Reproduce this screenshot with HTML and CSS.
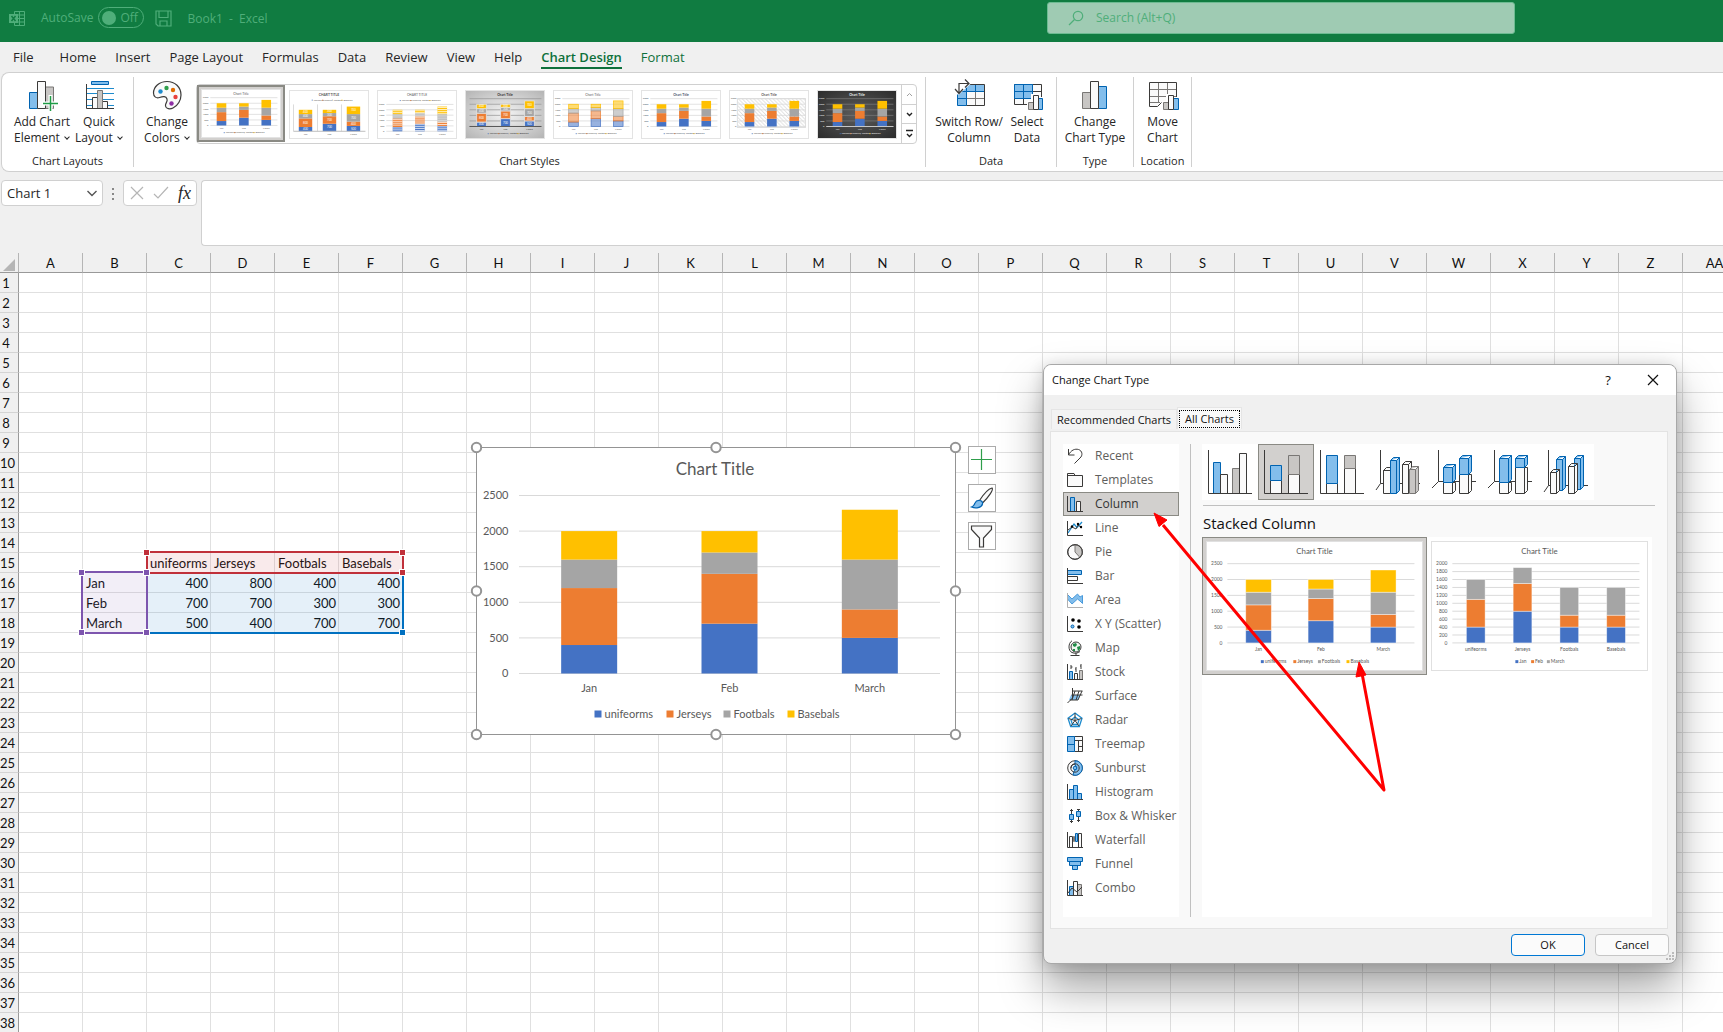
FILE: index.html
```html
<!DOCTYPE html>
<html lang="en">
<head>
<meta charset="utf-8">
<title>Book1 - Excel</title>
<link rel="stylesheet" href="styles.css">
</head>
<body>
<header class="titlebar">
  <svg class="app-icon" width="17" height="17" viewBox="0 0 17 17" fill="none" stroke="#4fae7a"><path d="M5.500 4V1.500h10v14h-10V13M10.500 1.500v14M5.500 5h10M9 8.500h6.500M5.500 12h10"/><rect x="0" y="4" width="9" height="9" fill="#4fae7a" stroke="none"/><path d="M2.500 6l4 5M6.500 6l-4 5" stroke="#107c41" stroke-width="1.500"/></svg>
  <label class="autosave">AutoSave <span class="toggle"><input type="checkbox"><span class="knob"></span>Off</span></label>
  <button class="save" aria-label="Save"><svg width="17" height="17" viewBox="0 0 17 17" fill="none" stroke="#4fae7a" stroke-width="1.200"><path d="M1 1h15v15H3l-2-2zM4 1v6.500h9V1M5 16v-5h7v5"/></svg></button>
  <span class="doc">Book1&nbsp; -&nbsp; Excel</span>
  <label class="search"><svg width="16" height="16" viewBox="0 0 16 16" fill="none" stroke="#4fae7a" stroke-width="1.200"><circle cx="10" cy="6" r="4.700"/><path d="M6.500 9.500L1 15"/></svg><input type="search" placeholder="Search (Alt+Q)" aria-label="Search"></label>
</header>

<nav class="tabs">
  <a href="#">File</a><a href="#">Home</a><a href="#">Insert</a><a href="#">Page Layout</a><a href="#">Formulas</a><a href="#">Data</a><a href="#">Review</a><a href="#">View</a><a href="#">Help</a><a href="#" class="green active">Chart Design</a><a href="#" class="green">Format</a>
</nav>

<section class="ribbon">
  <div class="group g-layouts">
    <div class="tools">
      <button class="tool w60"><svg width="32" height="32" viewBox="0 0 32 32"><path d="M19.500 8h8v21.500h-8z" fill="#c8c6c4" stroke="#797775"/><path d="M3.500 13.500h8v16h-8z" fill="#83beec" stroke="#0063b1"/><path d="M11.500 2.500h8v27h-8z" fill="#fafafa" stroke="#3b3a39"/><path d="M24.500 16v16M16 24.500h16" stroke="#fff" stroke-width="4"/><path d="M24.500 17v15M17 24.500h15" stroke="#1e9b45" stroke-width="1.500"/></svg><span>Add Chart<br>Element <i class="chev"></i></span></button>
      <button class="tool w54"><svg width="32" height="32" viewBox="0 0 32 32"><path d="M8.500 2.500h17v3h-17z" fill="#83beec" stroke="#0063b1"/><path d="M4 9.500h27M4 14.500h27M4 20.500h27M4 26.500h27" stroke="#1e8bcd"/><path d="M9.500 18.500h5v11h-5zM19.500 22.500h5v7h-5z" fill="#fafafa" stroke="#3b3a39"/><path d="M14.500 11.500h5v18h-5z" fill="#c8c6c4" stroke="#797775"/><path d="M3.500 5v24.500H31" fill="none" stroke="#3b3a39"/></svg><span>Quick<br>Layout <i class="chev"></i></span></button>
    </div>
    <h2>Chart Layouts</h2>
  </div>
  <div class="group g-styles">
    <div class="tools">
      <button class="tool w58"><svg width="32" height="32" viewBox="0 0 32 32"><path d="M16 2.500C8 2.500 2.500 8 2.500 14c0 4 3 5.500 6 4.500 3.500-1.200 6.500-1.500 7.500 1.500 1 3-2 4-1.500 7 .5 3 4.500 3.500 7.500 2C27 26.500 30 21 30 16 30 8 24 2.500 16 2.500z" fill="#fafafa" stroke="#3b3a39" stroke-width="1.200"/><circle cx="9.500" cy="12.500" r="2.200" fill="#1e8bcd"/><circle cx="15.500" cy="9" r="2.200" fill="#2f9e4b"/><circle cx="22" cy="11" r="2.200" fill="#e06c00"/><circle cx="24.500" cy="18" r="2.200" fill="#e8403c"/><circle cx="20.500" cy="24.500" r="2.200" fill="#8e2fa5"/></svg><span>Change<br>Colors <i class="chev"></i></span></button>
      <div class="gallery">
        <button class="style on" data-style="0" aria-label="Style 1"></button><button class="style" data-style="1" aria-label="Style 2"></button><button class="style" data-style="2" aria-label="Style 3"></button><button class="style" data-style="3" aria-label="Style 4"></button><button class="style" data-style="4" aria-label="Style 5"></button><button class="style" data-style="5" aria-label="Style 6"></button><button class="style" data-style="6" aria-label="Style 7"></button><button class="style" data-style="7" aria-label="Style 8"></button>
        <div class="scroller">
          <button aria-label="Up"><svg width="9" height="9" viewBox="0 0 9 9" fill="none" stroke="#a0a0a0"><path d="M2 6l2.500-2.500L7 6"/></svg></button>
          <button aria-label="Down"><svg width="9" height="9" viewBox="0 0 9 9" fill="none" stroke="#222" stroke-width="1.400"><path d="M2 3l2.500 2.500L7 3"/></svg></button>
          <button aria-label="More"><svg width="9" height="9" viewBox="0 0 9 9" fill="none" stroke="#222" stroke-width="1.400"><path d="M1 1.500h7M2 5l2.500 2.500L7 5"/></svg></button>
        </div>
      </div>
    </div>
    <h2>Chart Styles</h2>
  </div>
  <div class="group g-data">
    <div class="tools">
      <button class="tool w76"><svg width="32" height="32" viewBox="0 0 32 32"><path d="M4.500 5.500h27v21h-27z" fill="#fafafa"/><path d="M4.500 5.500h27v7h-18v14h-9z" fill="#83beec"/><path d="M13.500 19.500h18M22.500 12.500v14" stroke="#797775"/><path d="M13.500 12.500h18M13.500 12.500v14M4.500 12.500h9M22.500 5.500v7M4.500 19.500h9M13.500 5.500v7M4.500 14v12.500h9" stroke="#0063b1" fill="none"/><path d="M14 5.500h17.500v21h-18" fill="none" stroke="#3b3a39"/><path d="M0 0h17.500v5L6 15.500H0z" fill="#fff"/><path d="M6 14V4.500h10M12 .5l4 4-4 4M2 10l4 4.500L10 10" fill="none" stroke="#3b3a39" stroke-width="1.200"/></svg><span>Switch Row/<br>Column</span></button>
      <button class="tool w40"><svg width="32" height="32" viewBox="0 0 32 32"><path d="M3.500 5.500h27v20h-27z" fill="#fafafa" stroke="#3b3a39"/><path d="M12.500 19v7M3 19.500h20M21.500 12.500h9" stroke="#3b3a39"/><path d="M3.500 5.500h18v14h-18zM12.500 5.500v14M3.500 12.500h18" fill="#83beec" stroke="#0063b1"/><path d="M16 22h4v-7h7v3h5v14H16z" fill="#fff"/><path d="M17.500 23.500h5v7h-5z" fill="#c8c6c4" stroke="#797775"/><path d="M27.500 19.500h4v11h-4z" fill="#83beec" stroke="#0063b1"/><path d="M22.500 16.500h5v14h-5z" fill="#fafafa" stroke="#3b3a39"/></svg><span>Select<br>Data</span></button>
    </div>
    <h2>Data</h2>
  </div>
  <div class="group g-type">
    <div class="tools">
      <button class="tool w76"><svg width="32" height="32" viewBox="0 0 32 32"><path d="M3.500 13.500h8v16h-8z" fill="#c8c6c4" stroke="#797775"/><path d="M19.500 7.500h8v22h-8z" fill="#83beec" stroke="#0063b1"/><path d="M11.500 2.500h8v27h-8z" fill="#fafafa" stroke="#3b3a39"/></svg><span>Change<br>Chart Type</span></button>
    </div>
    <h2>Type</h2>
  </div>
  <div class="group g-loc">
    <div class="tools">
      <button class="tool w54"><svg width="32" height="32" viewBox="0 0 32 32"><path d="M2.500 3.500h27v20l-15 0-4 4h-8z" fill="#fafafa"/><path d="M11.500 3.500v20M20.500 3.500v16M3 10.500h26M3 17.500h26M3 23.500h10" fill="none" stroke="#797775"/><path d="M29.500 18V3.500h-27v24h8l4-4" fill="none" stroke="#3b3a39"/><path d="M15 22h4v-7h7v3h6v14H15z" fill="#fff"/><path d="M16.500 23.500h5v7h-5z" fill="#c8c6c4" stroke="#797775"/><path d="M26.500 19.500h5v11h-5z" fill="#83beec" stroke="#0063b1"/><path d="M21.500 16.500h5v14h-5z" fill="#fafafa" stroke="#3b3a39"/></svg><span>Move<br>Chart</span></button>
    </div>
    <h2>Location</h2>
  </div>
</section>

<section class="formula">
  <div class="namebox"><input value="Chart 1" aria-label="Name box"><button aria-label="Names"><svg width="12" height="12" viewBox="0 0 12 12" fill="none" stroke="#555" stroke-width="1.400"><path d="M1.500 4L6 8.500 10.500 4"/></svg></button></div>
  <svg class="dots" width="3" height="12" viewBox="0 0 3 12" fill="#888"><path d="M0 0h2v2H0zM0 5h2v2H0zM0 10h2v2H0z"/></svg>
  <div class="fxbox">
    <button aria-label="Cancel entry"><svg width="14" height="14" viewBox="0 0 14 14" stroke="#b5b5b5" stroke-width="1.200"><path d="M1 1l12 12M13 1L1 13"/></svg></button>
    <button aria-label="Enter"><svg width="16" height="14" viewBox="0 0 16 14" fill="none" stroke="#b5b5b5" stroke-width="1.200"><path d="M1 8l4 4L15 1"/></svg></button>
    <button class="fx">fx</button>
  </div>
  <textarea aria-label="Formula bar"></textarea>
</section>

<main class="sheet">
  <table><thead id="cols"></thead><tbody id="rows"></tbody></table>

  <div class="range blue"><i class="br"></i></div>
  <div class="range red"><i class="tl"></i><i class="tr"></i><i class="br"></i></div>
  <div class="range purple"><i class="tl"></i><i class="tr"></i><i class="bl"></i><i class="br"></i></div>

  <figure class="chart" id="chart"></figure>
  <div class="chart-tools">
    <button aria-label="Chart elements"><svg width="26" height="26" viewBox="0 0 26 26"><path d="M12.500 2v21M2 12.500h21" stroke="#2f9e4b" stroke-width="1.200"/></svg></button>
    <button aria-label="Chart styles"><svg width="26" height="26" viewBox="0 0 26 26"><path d="M10.500 15.500C14 10 19 4 23 3c2 1.500-4 10-9.500 15z" fill="#fafafa" stroke="#3b3a39" stroke-width="1.200"/><path d="M10.500 15.500c2 0 3.500 1.500 3 3.500-1 4-7 4.500-11 3 3-1 2.500-2 3.500-4 .8-1.700 2.500-2.700 4.500-2.500z" fill="#83beec" stroke="#0063b1" stroke-width="1.200"/></svg></button>
    <button aria-label="Chart filters"><svg width="26" height="26" viewBox="0 0 26 26"><path d="M2.500 3h20v3.500l-8 8.500v9h-4v-9l-8-8.500z" fill="#fafafa" stroke="#3b3a39" stroke-width="1.200"/></svg></button>
  </div>
</main>

<section class="dialog" role="dialog" aria-label="Change Chart Type">
  <div class="dlg-title"><span>Change Chart Type</span><button aria-label="Help">?</button><button aria-label="Close"><svg width="12" height="12" viewBox="0 0 12 12" stroke="#111" stroke-width="1.200"><path d="M1 1l10 10M11 1L1 11"/></svg></button></div>
  <div class="dlg-tabs" role="tablist"><button role="tab">Recommended Charts</button><button role="tab" class="on"><span>All Charts</span></button></div>
  <div class="panel">
    <div class="types">
      <button><svg viewBox="0 0 16 16"><path d="M1.500 1v6h6M1.500 7C4 2 8 .5 11.500 1.500c4 1.300 4.500 6 1.500 8.500L7.500 15.500" class="k"/></svg>Recent</button>
      <button><svg viewBox="0 0 16 16"><path d="M.5 1.500h6.500l1 2h7.500v11H.5zM.5 3.500H8" class="w"/></svg>Templates</button>
      <button class="on"><svg viewBox="0 0 16 16"><path d="M3.500 1.500h4v14h-4z" class="b"/><path d="M9.500 5.500h4v10h-4z" class="w"/><path d="M.5 0v15.500H16" class="k"/></svg>Column</button>
      <button><svg viewBox="0 0 16 16"><path d="M1 13l6-9 3 3.500 5-5.500" class="bl"/><path d="M1 10l4-3 4 2 2-4 4 3" class="k"/><circle cx="5" cy="6.500" r="1.200"/><circle cx="11" cy="4" r="1.200"/><circle cx="14" cy="7" r="1.200"/><path d="M.5 1v14.500H16" class="k"/></svg>Line</button>
      <button><svg viewBox="0 0 16 16"><circle cx="8" cy="8" r="7.300" class="w"/><path d="M8 .7v7.300l5 5.500A7.300 7.300 0 0 0 8 .7z" class="g"/><circle cx="8" cy="8" r="7.300" class="k"/></svg>Pie</button>
      <button><svg viewBox="0 0 16 16"><path d="M.5 2.500h14v4H.5z" class="b"/><path d="M.5 8.500h10v4H.5z" class="w"/><path d="M.5 0v15.500H16" class="k"/></svg>Bar</button>
      <button><svg viewBox="0 0 16 16"><path d="M.5 2.500L5 7l5.500-5 2.500 3 2.500-1.500v8L13 9l-2.500-2L5 12 .5 7z" class="b l"/><path d="M.5 1v14.500H16" class="k l2"/></svg>Area</button>
      <button><svg viewBox="0 0 16 16"><circle cx="6" cy="4" r="1.800"/><circle cx="12" cy="5" r="1.800"/><circle cx="12" cy="11" r="1.800"/><circle cx="5.500" cy="10.500" r="1.500" class="b"/><path d="M.5 0v15.500H16" class="k"/></svg>X Y (Scatter)</button>
      <button><svg viewBox="0 0 16 16"><circle cx="9" cy="7" r="5" fill="#eef7f0" stroke="#3b3a39"/><path d="M6 4l3-1 1 2-2 2-2-1zM10 7l3-1v3l-2 2zM6 9h2v2H6z" fill="#1e8b45"/><path d="M5 .8C1 3 1 11 5 12.500c3 1.500 6 .5 8-1M9 13v2M3.500 15.500h9" class="k"/></svg>Map</button>
      <button><svg viewBox="0 0 16 16"><path d="M2.500 7.500h3v8h-3z" class="b"/><path d="M7.500 9.500h3v6h-3z" class="w"/><path d="M12.500 6.500h3v9h-3z" class="g"/><path d="M.5 0v15.500H16M4 1v4M9 3v5M14 0v5M4 3h1.500M8 5h1M13 2h1" class="k"/></svg>Stock</button>
      <button><svg viewBox="0 0 16 16"><path d="M4 7h9l-2 5H2z" fill="#83beec"/><path d="M5.500 0v10L.5 15M6 3h9.500M4.500 7h11M3 12h8M8 3L5 12M12 3l-3 9M15 3l-4 9" class="k"/></svg>Surface</button>
      <button><svg viewBox="0 0 16 16"><path d="M8 1l7 5.200-2.700 8.300H3.700L1 6.200zM8 5l4 3-1.500 4.500h-5L4 8z" class="bl"/><path d="M8 1v7.500M1.500 6.500L8 8.500l6.500-2M4 14l4-5.500 4 5.500" class="k"/></svg>Radar</button>
      <button><svg viewBox="0 0 16 16"><path d="M7.500.5h8v15h-8zM7.500 4.500h8M11.500 4.500v11M11.500 10.500h4" class="w"/><path d="M.5.5h7v15h-7zM.5 8.500h7" class="b"/></svg>Treemap</button>
      <button><svg viewBox="0 0 16 16"><circle cx="8" cy="8" r="7.300" class="w"/><path d="M8 .7a7.300 7.300 0 1 1-2 14.300L7 11a3.500 3.500 0 0 0 1-6z" class="b"/><path d="M4 8a4 4 0 0 1 4-4" class="k"/><circle cx="8" cy="8" r="4.200" class="k"/><circle cx="8" cy="8" r="1.800" class="b"/></svg>Sunburst</button>
      <button><svg viewBox="0 0 16 16"><path d="M2.500 5.500h4v10h-4zM6.500 1.500h4v14h-4zM10.500 9.500h4v6h-4z" class="b"/><path d="M.5 0v15.500H16" class="k"/></svg>Histogram</button>
      <button><svg viewBox="0 0 16 16"><path d="M4.500 1v14M11.500 1v13M3 2.500h3M3 13.500h3M10 1.500h3M10 12.500h3" class="k"/><path d="M2.500 6.500h4v5h-4zM9.500 3.500h4v5h-4z" class="b"/></svg>Box &amp; Whisker</button>
      <button><svg viewBox="0 0 16 16"><path d="M2.500 4.500h3v11h-3zM11.500 1.500h3v14h-3z" class="w"/><path d="M8.500 1.500h2v8h-2z" class="b"/><path d="M6.500 4.500v5h1v-5z" class="g"/><path d="M.5 0v15.500H16" class="k"/></svg>Waterfall</button>
      <button><svg viewBox="0 0 16 16"><path d="M.5 1.500h15v4H.5zM2.500 5.500h11v4h-11zM5.500 9.500h5v4h-5z" class="b"/></svg>Funnel</button>
      <button><svg viewBox="0 0 16 16"><path d="M2.500 6.500h4v9h-4z" class="b"/><path d="M10.500 4.500h4v11h-4z" class="g"/><path d="M6.500 1.500h4v14h-4z" class="w"/><path d="M.5 0v15.500H16M1 13l4-5 5 4 5-5" class="k"/></svg>Combo</button>
    </div>
    <div class="detail">
      <div class="subtypes">
        <button aria-label="Clustered Column"><svg viewBox="0 0 56 56"><path d="M11.500 18.500h7v31h-7z" class="b"/><path d="M18.500 30.500h7v19h-7z" class="w"/><path d="M30.500 24.500h7v25h-7z" class="g"/><path d="M37.500 9.500h7v40h-7z" class="w"/><path d="M6.500 6v43.500H50" class="k"/></svg></button>
        <button class="on" aria-label="Stacked Column"><svg viewBox="0 0 56 56"><path d="M12.500 36.500h11v13h-11zM30.500 30.500h11v19h-11z" class="w"/><path d="M30.500 11.500h11v19h-11z" class="g"/><path d="M12.500 21.500h11v15h-11z" class="b"/><path d="M6.500 6v43.500H50" class="k"/></svg></button>
        <button aria-label="100% Stacked Column"><svg viewBox="0 0 56 56"><path d="M12.500 39.500h11v10h-11zM30.500 24.500h11v25h-11z" class="w"/><path d="M30.500 11.500h11v13h-11z" class="g"/><path d="M12.500 11.500h11v28h-11z" class="b"/><path d="M6.500 6v43.500H50" class="k"/></svg></button>
        <button aria-label="3-D Clustered Column"><svg viewBox="0 0 56 56"><path d="M10.500 6v33.500H50M10.500 39.500L6 46" class="k"/><path d="M13.500 26.500l3-3h7l-3 3h-7zM13.500 26.500h7v23h-7z" class="w"/><path d="M20.500 16.500l3-3h6v33l-3 3h-6zM20.500 16.500h6l3-3M26.500 16.500v33" class="b"/><path d="M32.500 20.500l3-3h6v29l-3 3h-6zM32.500 20.500h6l3-3M38.500 20.500v29" class="w"/><path d="M39.500 25.500l3-3h6v24l-3 3h-6zM39.500 25.500h6l3-3M45.500 25.500v24" class="g"/></svg></button>
        <button aria-label="3-D Stacked Column"><svg viewBox="0 0 56 56"><path d="M12.500 6v31.500H50M12.500 37.500L6 44" class="k"/><path d="M17.500 38.500h12v8l-3 3h-9zM26.500 38.500v11M33.500 30.500h12v16l-3 3h-9zM42.500 30.500v19" class="w"/><path d="M17.500 23.500l3-3h9v15l-3 3h-9zM17.500 23.500h9l3-3M26.500 23.500v15M33.500 14.500l3-3h9v16l-3 3h-9zM33.500 14.500h9l3-3M42.500 14.500v16" class="b"/></svg></button>
        <button aria-label="3-D 100% Stacked Column"><svg viewBox="0 0 56 56"><path d="M12.500 6v31.500H50M12.500 37.500L6 44" class="k"/><path d="M17.500 38.500h12v8l-3 3h-9zM26.500 38.500v11M33.500 23.500h12v23l-3 3h-9zM42.500 23.500v26" class="w"/><path d="M17.500 14.500l3-3h9v24l-3 3h-9zM17.500 14.500h9l3-3M26.500 14.500v24M33.500 14.500l3-3h9v9l-3 3h-9zM33.500 14.500h9l3-3M42.500 14.500v9" class="b"/></svg></button>
        <button aria-label="3-D Column"><svg viewBox="0 0 56 56"><path d="M10.500 6v35.500H50M10.500 41.500L6 48" class="k"/><path d="M18.500 15.500l3-3h6v31l-3 3h-6zM18.500 15.500h6l3-3M24.500 15.500v31M36.500 14.500l3-3h6v31l-3 3h-6zM36.500 14.500h6l3-3M42.500 14.500v31" class="b"/><path d="M12.500 28.500l3-3h6v21l-3 3h-6zM12.500 28.500h6l3-3M18.500 28.500v21M30.500 22.500l3-3h6v27l-3 3h-6zM30.500 22.500h6l3-3M36.500 22.500v27" class="w"/></svg></button>
      </div>
      <h3>Stacked Column</h3>
      <div class="previews">
        <button class="preview on" id="preview1" aria-label="By month"></button>
        <button class="preview" id="preview2" aria-label="By product"></button>
      </div>
    </div>
  </div>
  <div class="dlg-actions"><button class="primary">OK</button><button>Cancel</button></div>
  <svg class="grip" width="9" height="9" viewBox="0 0 9 9" fill="#bbb"><path d="M6 0h2v2H6zM3 3h2v2H3zM6 3h2v2H6zM0 6h2v2H0zM3 6h2v2H3zM6 6h2v2H6z"/></svg>
  <svg class="arrows" width="240" height="290" viewBox="0 0 240 290"><path d="M14 17L235 282L212 160" fill="none" stroke="#f00" stroke-width="3" stroke-linejoin="round"/><path d="M5 5l13 7-8 6.500zM210 154l7 13-10 2z" fill="#f00" stroke="#f00"/></svg>
</section>
<script src="app.js"></script>
</body>
</html>
```

FILE: styles.css
```css
* { box-sizing: border-box; }
body { margin: 0; height: 100vh; overflow: hidden; position: relative; display: flex; flex-direction: column; background: #f0f0f0; color: #262626; font: 12px/16px "Open Sans", "Noto Sans", sans-serif; }
button, input, textarea { font: inherit; color: inherit; border: 0; padding: 0; margin: 0; background: none; }
svg { display: block; flex: none; }
h2, h3 { margin: 0; font-weight: 400; }

.titlebar { flex: none; height: 42px; display: flex; align-items: flex-start; padding: 2px 208px 0 9px; background: #107c41; color: #4fae7a; position: relative; }
.app-icon, .save { margin-top: 8px; }
.autosave { display: flex; align-items: center; gap: 5px; margin: 5px 11px 0 15px; }
.toggle { display: flex; align-items: center; gap: 4px; width: 46px; height: 21px; border: 1px solid #4fae7a; border-radius: 11px; padding-left: 3px; position: relative; }
.toggle input { position: absolute; inset: 0; width: 100%; height: 100%; opacity: 0; }
.knob { width: 14px; height: 14px; border-radius: 50%; background: #4fae7a; }
.doc { margin: 9px 0 0 15px; }
.search { margin-left: auto; width: 468px; height: 32px; display: flex; align-items: center; gap: 12px; padding-left: 20px; background: #9fcbb3; border: 1px solid #6dbb92; border-radius: 3px; }
.search input { flex: 1; outline: 0; }
.search input::placeholder { color: #4fae7a; opacity: 1; }

.tabs { flex: none; height: 30px; display: flex; gap: 19px; padding: 6px 13px 0; font-size: 13px; line-height: 18px; }
.tabs a { color: inherit; text-decoration: none; white-space: nowrap; }
.tabs a:first-child { margin-right: 7px; }
.tabs .green { color: #0e703b; }
.tabs .active { height: 21px; font-weight: 600; border-bottom: 2px solid #0e703b; }

.ribbon { flex: none; height: 100px; margin-left: 1px; display: flex; background: #fff; border: 1px solid #d0d0d0; border-right: 0; border-radius: 8px 0 0 8px; padding: 4px 0; }
.group { border-right: 1px solid #d0d0d0; display: flex; flex-direction: column; justify-content: space-between; }
.tools { display: flex; }
.group h2 { text-align: center; font-size: 11px; line-height: 12px; position: relative; }
.g-layouts { width: 132px; }
.g-layouts .tools { padding-left: 10px; }
.g-styles .tools { padding: 0 8px 0 4px; }
.g-data .tools { padding: 0 9px 0 5px; }
.g-loc .tools { justify-content: center; }
.g-loc { width: 58px; }
.tool { display: flex; flex-direction: column; align-items: center; padding-top: 2px; white-space: nowrap; gap: 3px; }
.w40 { width: 40px; } .w54 { width: 54px; } .w58 { width: 58px; } .w60 { width: 60px; } .w76 { width: 76px; }
.chev { display: inline-block; width: 4px; height: 4px; margin: 0 1px 3px 2px; border: solid #262626; border-width: 0 1px 1px 0; transform: rotate(45deg); }
.gallery { display: flex; margin-top: 7px; height: 60px; border: 1px solid #d0d0d0; border-radius: 4px; }
.style { width: 88px; padding: 4px; }
.style.on { height: 57px; padding: 2px; border: 2px solid #8a8a84; background: #d2d0ce; }
.style svg { border: 1px solid #e3e3e3; }
.scroller { width: 15px; display: flex; flex-direction: column; border-left: 1px solid #d0d0d0; }
.scroller button { flex: 1; display: grid; place-items: center; border-bottom: 1px solid #d0d0d0; }
.scroller button:last-child { border: 0; }

.formula { flex: none; display: flex; align-items: flex-start; height: 81px; padding-top: 8px; }
.namebox, .fxbox { display: flex; align-items: center; height: 26px; background: #fff; border: 1px solid #d0d0d0; border-radius: 4px; }
.namebox { width: 102px; margin-left: 1px; padding: 0 5px; font-size: 13px; }
.namebox input { width: 79px; outline: 0; }
.dots { margin: 8px 8px 0 9px; }
.fxbox { width: 74px; padding: 0 5px 0 6px; justify-content: space-between; }
.fx { font: italic 18px/20px "Liberation Serif", serif; }
.formula textarea { flex: 1; height: 66px; margin-left: 4px; background: #fff; border: 1px solid #d0d0d0; border-right: 0; border-radius: 4px 0 0 4px; resize: none; outline: 0; }

.sheet { flex: 1; position: relative; overflow: hidden; background: #fff; font: 13px/18px Lato, "Open Sans", sans-serif; color: #111; }
.sheet table { table-layout: fixed; width: 1811px; border-spacing: 0; }
.sheet th, .sheet td { height: 20px; padding: 0; border: solid #e0e0e0; border-width: 0 1px 1px 0; overflow: hidden; white-space: nowrap; width: 64px; }
.sheet th { font-weight: 400; background: #f0f0f0; }
.sheet thead th { border-color: #b5b5b5; border-bottom-color: #999; text-align: center; }
.sheet th:first-child { width: 19px; }
.sheet tbody th { border-right-color: #999; border-bottom-color: #d4d4d4; padding-right: 6px; text-align: center; }
.sheet td { padding: 1px 2px 0 3px; }
.sheet td.num { text-align: right; padding-right: 2px; }
.corner svg { margin: 5px 0 0 3px; }

.range { position: absolute; border: 2px solid; }
.range i { position: absolute; width: 7px; height: 7px; border: 1px solid #fff; background: currentColor; }
.tl { left: -5px; top: -4px; } .tr { right: -4px; top: -4px; } .bl { left: -5px; bottom: -4px; } .br { right: -4px; bottom: -4px; }
.blue { color: #0070c0; background: rgba(0,112,192,.1); left: 146px; top: 320px; width: 258px; height: 61px; border-top: 0; }
.red { color: #c0303a; background: rgba(192,48,58,.1); left: 146px; top: 298px; width: 258px; height: 23px; }
.purple { color: #7d55ae; background: rgba(125,85,174,.1); left: 81px; top: 318px; width: 67px; height: 63px; }

.chart { position: absolute; left: 470px; top: 188px; margin: 0; }
.chart-tools { position: absolute; left: 968px; top: 193px; display: flex; flex-direction: column; gap: 10px; }
.chart-tools button { width: 28px; height: 28px; background: #fff; border: 1px solid #ababab; }
svg text { font-family: Lato, "Open Sans", sans-serif; fill: #595959; }

.dialog { position: absolute; left: 1043px; top: 364px; width: 634px; background: #f0f0f0; border: 1px solid #a8a8a8; border-radius: 8px; box-shadow: 0 24px 44px rgba(0,0,0,.36), 0 2px 16px rgba(0,0,0,.16); color: #111; }
.dlg-title { display: flex; align-items: center; height: 30px; background: #fff; border-radius: 8px 8px 0 0; padding: 0 7px 0 8px; font-size: 11px; }
.dlg-title span { flex: 1; }
.dlg-title button { width: 32px; display: grid; place-items: center; font-size: 13px; }
.dlg-title button + button { margin-left: 13px; }
.dlg-tabs { display: flex; align-items: flex-end; padding: 11px 7px 0; height: 34px; font-size: 11px; }
.dlg-tabs button { height: 20px; padding: 0 5px; background: #f3f3f3; border: 1px solid #e5e5e5; border-bottom: 0; white-space: nowrap; }
.dlg-tabs .on { height: 22px; padding: 1px; background: #f9f9f9; }
.dlg-tabs .on span { display: block; border: 1px dotted #000; padding: 0 5px; }
.panel { margin: 2px 8px 0 6px; border: 1px solid #e3e3e3; background: #f9f9f9; padding: 12px 15px 11px 12px; display: flex; gap: 11px; }
.types { width: 116px; height: 473px; background: #fff; }
.types button { display: flex; align-items: center; gap: 12px; width: 100%; height: 24px; padding-left: 3px; border: 1px solid transparent; color: #605e5c; white-space: nowrap; }
.types svg { width: 16px; height: 16px; }
.types .on { background: #d2d0ce; border-color: #8a8a84; color: #333; }
.k { fill: none; stroke: #3b3a39; } .w { fill: #fafafa; stroke: #3b3a39; } .b { fill: #83beec; stroke: #0063b1; } .g { fill: #c8c6c4; stroke: #797775; } .bl { fill: none; stroke: #1e8bcd; stroke-width: 1.3; }
.l { stroke: #4a9bdc; } .l2 { stroke: #b0b0b0; }
.detail { flex: 1; border-left: 1px solid #c0c0c0; padding-left: 11px; }
.subtypes { display: flex; width: 392px; background: #fff; }
.subtypes button { width: 56px; height: 56px; position: relative; display: grid; place-items: center; }
.subtypes svg { width: 56px; height: 56px; }
.subtypes .on { background: #d2d0ce; outline: 1px solid #8a8a84; outline-offset: -1px; }
.detail h3 { margin: 5px -3px 0 1px; border-top: 1px solid #c0c0c0; padding-top: 7px; height: 32px; font-size: 15px; line-height: 20px; }
.previews { display: flex; align-items: flex-start; height: 380px; background: #fff; }
.preview { padding: 4px; }
.preview.on { border: 1px solid #8a8a84; background: #d2d0ce; padding: 3px; }
.preview svg { border: 1px solid #e0e0e0; }
.dlg-actions { display: flex; justify-content: flex-end; gap: 10px; padding: 5px 7px 7px; font-size: 11px; }
.dlg-actions button { width: 74px; height: 22px; background: #fbfbfb; border: 1px solid #c6c6c6; border-radius: 4px; }
.dlg-actions .primary { border-color: #0078d4; }
.grip { position: absolute; right: 1px; bottom: 2px; }
.arrows { position: absolute; left: 105px; top: 143px; pointer-events: none; }
```

FILE: app.js
```js
const BLUE = '#4472c4', ORANGE = '#ed7d31', GRAY = '#a5a5a5', GOLD = '#ffc000';
const months = ['Jan', 'Feb', 'March'];
const products = [
  { name: 'unifeorms', color: BLUE, values: [400, 700, 500] },
  { name: 'Jerseys', color: ORANGE, values: [800, 700, 400] },
  { name: 'Footbals', color: GRAY, values: [400, 300, 700] },
  { name: 'Basebals', color: GOLD, values: [400, 300, 700] }
];

/* Spreadsheet grid */
const letters = [...'ABCDEFGHIJKLMNOPQRSTUVWXYZ', 'AA', 'AB'];
document.getElementById('cols').innerHTML =
  '<tr><th class="corner"><svg width="13" height="13"><path d="M12 0v12H0z" fill="#b5b5b5"/></svg></th>' +
  letters.map(l => `<th>${l}</th>`).join('') + '</tr>';

const cells = {};
products.forEach((p, c) => {
  cells['15-' + (c + 2)] = p.name;
  p.values.forEach((v, r) => { cells[(16 + r) + '-' + (c + 2)] = v; });
});
months.forEach((m, r) => { cells[(16 + r) + '-1'] = m; });

let body = '';
for (let r = 1; r <= 38; r++) {
  body += `<tr><th>${r}</th>`;
  letters.forEach((_, c) => {
    const v = cells[r + '-' + c];
    body += `<td${typeof v === 'number' ? ' class="num"' : ''}>${v ?? ''}</td>`;
  });
  body += '</tr>';
}
document.getElementById('rows').innerHTML = body;

/* Stacked column chart as SVG markup */
function chart(o) {
  const [x0, y0, x1, y1] = o.plot;
  const text = (x, y, s, size, anchor, extra = '') =>
    `<text x="${x}" y="${y}" font-size="${size}" text-anchor="${anchor}" ${extra}>${s}</text>`;
  const ink = o.ink ? `style="fill:${o.ink}"` : '';
  const line = o.line || '#d9d9d9';
  let s = o.back || '';
  for (let v = 0; v <= o.max; v += o.step) {
    const y = y1 - (y1 - y0) * v / o.max;
    if (!o.noGrid) s += `<path d="M${x0} ${y}H${x1}" stroke="${line}" stroke-width="${o.lineW || 1}"/>`;
    if (!o.noAxis) s += text(o.axisX, y + o.fs * .34, v, o.fs, 'end', ink);
  }
  const step = (x1 - x0) / o.cats.length;
  o.cats.forEach((c, i) => {
    const cx = x0 + step * (i + .5);
    if (o.noGrid) s += `<path d="M${cx - step / 2} ${y0}V${y1}" stroke="${line}"/>`;
    let base = y1;
    o.series.forEach(se => {
      const h = (y1 - y0) * se.values[i] / o.max;
      base -= h;
      s += `<rect x="${cx - o.barW / 2}" y="${base}" width="${o.barW}" height="${h}" fill="${se.color}" ${o.bar ? o.bar(se.color) : ''}/>`;
      if (o.stripe) for (let y = base + 1; y < base + h; y += 2) s += `<path d="M${cx - o.barW / 2} ${y}h${o.barW}" stroke="#fff" stroke-width=".8"/>`;
      if (o.labels) s += text(cx, base + h / 2 + 1, se.values[i], 3, 'middle', 'style="fill:#fff"');
    });
    s += text(cx, o.catY, c, o.fs, 'middle', ink);
  });
  if (o.noGrid || o.darkBase) s += `<path d="M${x0} ${y1}H${x1}" stroke="${o.darkBase || '#bbb'}" stroke-width="1"/>`;
  s += text(o.w / 2, o.titleY, o.title || 'Chart Title', o.titleFs, 'middle', `${ink} ${o.bold ? 'font-weight="700"' : ''}`);
  o.series.forEach((se, i) => {
    s += `<rect x="${o.legendX[i]}" y="${o.legendY - o.sq}" width="${o.sq}" height="${o.sq}" fill="${se.color}"/>` +
      text(o.legendX[i] + o.sq + (o.legendGap ?? 1), o.legendY, se.name, o.fs, 'start', ink);
  });
  return s;
}
const svg = (w, h, inner, bg = '#fff') => `<svg width="${w}" height="${h}" viewBox="0 0 ${w} ${h}" style="background:${bg}">${inner}</svg>`;

/* Chart object on the sheet, with its selection handles */
const W = 479, H = 287;
let handles = '';
[[0, 0], [W / 2, 0], [W, 0], [0, H / 2], [W, H / 2], [0, H], [W / 2, H], [W, H]].forEach(([x, y]) => {
  handles += `<circle cx="${x}" cy="${y}" r="4.700" fill="#fff" stroke="#949494" stroke-width="2"/>`;
});
document.getElementById('chart').innerHTML = svg(492, 300,
  `<g transform="translate(6.500 6.500)"><rect width="${W}" height="${H}" fill="#fff" stroke="#949494"/>` +
  chart({ w: W - 2, plot: [42.5, 48, 463.5, 226], max: 2500, step: 500, cats: months, series: products, barW: 56, axisX: 32, fs: 11,
    catY: 244, titleY: 27, titleFs: 17, legendX: [118, 190, 247, 311], legendY: 270, sq: 7, legendGap: 3 }) + handles + '</g>', 'none');

/* Dialog previews */
const small = { w: 217, plot: [20, 22, 210, 102.5], barW: 26, axisX: 15, fs: 5, catY: 111, titleY: 12, titleFs: 8, legendY: 123, sq: 3,
  bar: () => 'stroke="#fff" stroke-opacity=".5" stroke-width=".8"' };
document.getElementById('preview1').innerHTML = svg(217, 130, chart({ ...small, max: 2500, step: 500, cats: months, series: products, legendX: [54, 87, 112, 141] }));
document.getElementById('preview2').innerHTML = svg(217, 130, chart({ ...small, max: 2000, step: 200, barW: 19,
  cats: products.map(p => p.name),
  series: months.map((m, i) => ({ name: m, color: [BLUE, ORANGE, GRAY][i], values: products.map(p => p.values[i]) })),
  legendX: [84, 100, 116] }));

/* Ribbon style gallery */
const mini = { w: 80, plot: [8, 8, 78, 37], max: 2500, step: 500, cats: months, series: products, barW: 10, axisX: 6, fs: 2.5,
  catY: 41, titleY: 5, titleFs: 3.5, legendY: 45, sq: 1, legendX: [22, 33, 43, 53], lineW: .8 };
const hatch = '<defs><pattern id="hatch" width="4" height="4" patternUnits="userSpaceOnUse"><path d="M0 0l4 4" stroke="#c4c4c4" stroke-width=".7"/></pattern></defs><rect x="7" y="8" width="71" height="30" fill="url(#hatch)" stroke="#ddd"/>';
const styles = [
  [{}],
  [{ noGrid: true, noAxis: true, plot: [3, 14, 78, 42], catY: 46, barW: 14, labels: true, legendY: 10, title: 'CHART TITLE', bold: true }],
  [{ plot: [8, 14, 78, 42], catY: 46, legendY: 10.5, title: 'CHART TITLE', stripe: true }],
  [{ noAxis: true, plot: [3, 8, 78, 37], labels: true, bold: true, darkBase: '#555', ink: '#333', line: '#999', bar: () => 'stroke="#e4e4e4" stroke-width=".8"' }, 'radial-gradient(#f4f4f4,#b4b4b4)'],
  [{ bar: c => `fill-opacity=".55" stroke="${c}" stroke-width=".7"` }],
  [{ bold: true, ink: '#44546a' }],
  [{ back: hatch, bold: true }],
  [{ bold: true, ink: '#eee', line: '#777', darkBase: '#ccc' }, 'radial-gradient(#5c5c5c,#2c2c2c)']
];
document.querySelectorAll('.style').forEach(el => {
  const [opts, bg] = styles[el.dataset.style];
  el.innerHTML = svg(80, 49, chart({ ...mini, ...opts }), bg);
});
```
